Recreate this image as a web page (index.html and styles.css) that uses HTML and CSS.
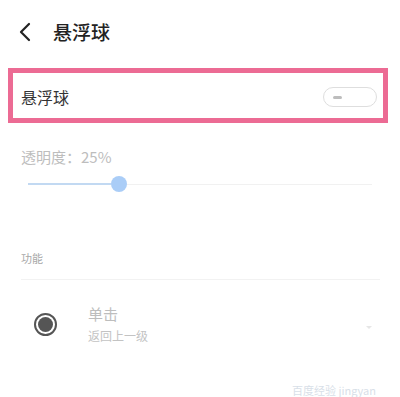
FILE: index.html
```html
<!DOCTYPE html>
<html lang="zh">
<head>
<meta charset="utf-8">
<link rel="stylesheet" href="styles.css">
</head>
<body>
<div class="page">
  <header class="topbar">
    <svg class="back" width="14" height="20" viewBox="0 0 14 20"><path d="M11 2 L3 10 L11 18" fill="none" stroke="#222" stroke-width="2.2" stroke-linecap="round" stroke-linejoin="round"/></svg>
    <span class="title">悬浮球</span>
  </header>
  <div class="hl">
    <span class="row-label">悬浮球</span>
    <span class="toggle"><span class="dash"></span></span>
  </div>
  <div class="opacity">
    <div class="op-label">透明度：25%</div>
    <div class="slider">
      <div class="fill"></div>
      <div class="thumb"></div>
      <div class="rest"></div>
    </div>
  </div>
  <div class="section">功能</div>
  <div class="item">
    <span class="radio"><span class="dot"></span></span>
    <div class="texts">
      <div class="main">单击</div>
      <div class="sub">返回上一级</div>
    </div>
    <span class="caret"></span>
  </div>
  <div class="wm">百度经验 jingyan</div>
</div>
</body>
</html>
```
FILE: styles.css
```css
* { box-sizing: border-box; }
html, body { margin: 0; padding: 0; background: #fff; }
body { font-family: "Noto Sans CJK SC", "Noto Sans", sans-serif; width: 400px; height: 397px; overflow: hidden; }
.page { position: relative; width: 400px; height: 397px; }
.topbar { height: 62px; display: flex; align-items: center; padding: 0 0 0 18px; }
.back { margin-right: 21px; margin-top: 2px; }
.title { font-size: 19px; color: #222; line-height: 1; margin-top: 1px; font-weight: 500; }
.hl { margin: 6px 12px 0 8px; height: 55px; border: 5px solid #ec6b94; display: flex; align-items: center; justify-content: space-between; padding: 0 6px 0 8px; }
.row-label { font-size: 16px; color: #333; margin-top: 2px; }
.toggle { width: 54px; height: 20px; border: 1.5px solid #dedede; border-radius: 10px; display: flex; align-items: center; padding-left: 9px; margin-top: 3px; }
.dash { width: 9px; height: 3px; background: #bdbdbd; border-radius: 2px; }
.opacity { padding: 24px 0 0 21px; }
.op-label { font-size: 15px; color: #bdbdbd; line-height: 20px; }
.slider { position: relative; height: 16px; margin: 9px 0 0 7px; width: 344px; display: flex; align-items: center; }
.fill { width: 83px; height: 2px; background: #c2d9f2; }
.thumb { width: 16px; height: 16px; border-radius: 50%; background: #aacdf7; flex: none; }
.rest { flex: 1; height: 1px; background: #f1f1f1; }
.section { margin: 59px 20px 0 21px; font-size: 11px; color: #a8a8a8; line-height: 14px; padding-bottom: 14px; border-bottom: 1px solid #f2f2f2; }
.item { display: flex; align-items: center; padding: 24px 0 0 34px; position: relative; }
.radio { width: 23px; height: 23px; border-radius: 50%; border: 2px solid #555; display: flex; align-items: center; justify-content: center; flex: none; }
.dot { width: 15px; height: 15px; border-radius: 50%; background: #555; }
.texts { margin-left: 31px; }
.main { font-size: 15px; color: #bdbdbd; line-height: 19px; }
.sub { font-size: 12px; color: #c3c3c3; line-height: 16px; margin-top: 5px; }
.caret { position: absolute; left: 366px; top: 46px; width: 0; height: 0; border-left: 3px solid transparent; border-right: 3px solid transparent; border-top: 3px solid #e6e6e6; }
.wm { position: absolute; left: 292px; top: 384px; font-size: 11px; line-height: 13px; color: #d8e0e8; white-space: nowrap; }
```
